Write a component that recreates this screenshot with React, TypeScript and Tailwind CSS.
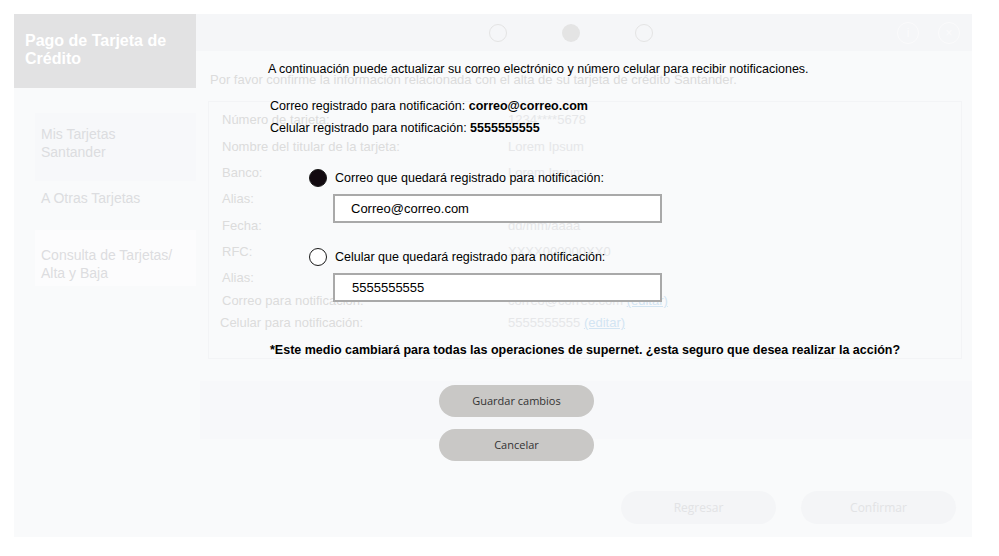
import { useState } from "react"

const FIELDS = [
  { label: "Número de tarjeta:", value: "1234****5678", y: "h-[27px]" },
  { label: "Nombre del titular de la tarjeta:", value: "Lorem Ipsum", y: "h-[26px]" },
  { label: "Banco:", value: "Lorem Ipsum", y: "h-[26px]" },
  { label: "Alias:", value: "Lorem Ipsum", y: "h-[27px]" },
  { label: "Fecha:", value: "dd/mm/aaaa", y: "h-[26px]" },
  { label: "RFC:", value: "XXXX000000XX0", y: "h-[26px]" },
  { label: "Alias:", value: "Lorem Ipsum", y: "h-[23px]" },
]

function Background() {
  return (
    <div className="ml-[14px] mt-[14px] flex h-[523px] w-[958px] bg-[#f9fafb]">
      <aside className="flex w-[182px] flex-col">
        <div className="h-[74px] bg-[#e2e2e3] px-[11px] pt-[18px] text-[16px] font-bold leading-[18px] text-white">
          Pago de Tarjeta de Crédito
        </div>
        <div className="mt-[25px] ml-[21px] flex flex-col text-[14px] leading-[18px] text-[#dcdde0]">
          <div className="h-[68px] bg-[#f7f8fa] pl-[6px] pr-[14px] pt-[12px]">Mis Tarjetas Santander</div>
          <div className="h-[49px] px-[6px] pt-[8px]">A Otras Tarjetas</div>
          <div className="h-[56px] bg-[#fcfcfd] pl-[6px] pr-[14px] pt-[16px]">Consulta de Tarjetas/ Alta y Baja</div>
        </div>
      </aside>
      <section className="flex flex-1 flex-col">
        <div className="flex h-[37px] items-center bg-[#f5f6f8] pl-[293px] pr-[12px]">
          <span className="h-[18px] w-[18px] rounded-full border border-[#e4e4e4]" />
          <span className="ml-[55px] h-[18px] w-[18px] rounded-full bg-[#e4e4e4]" />
          <span className="ml-[55px] h-[18px] w-[18px] rounded-full border border-[#e4e4e4]" />
          <span className="ml-auto flex h-[22px] w-[22px] items-center justify-center rounded-full border border-[#fbfbfc] text-[12px] text-[#fbfbfc]">i</span>
          <span className="ml-[19px] flex h-[22px] w-[22px] items-center justify-center rounded-full border border-[#fbfbfc] text-[12px] text-[#fbfbfc]">×</span>
        </div>
        <p className="ml-[14px] mt-[21px] text-[13px] leading-[16px] text-[#dcdcdc]">
          Por favor  confirme la información relacionada con el alta de su tarjeta de crédito Santander.
        </p>
        <div className="ml-[12px] mt-[13px] h-[258px] w-[754px] border border-[#f3f4f6] pl-[13px] pt-[10px] text-[13px] leading-[16px] text-[#dcdcdc]">
          {FIELDS.map((f, i) => (
            <div key={i} className={`flex ${f.y}`}>
              <span className="w-[286px]">{f.label}</span>
              <span className="text-[#e6e7e9]">{f.value}</span>
            </div>
          ))}
          <div className="flex h-[22px]">
            <span className="w-[286px]">Correo para notificación:</span>
            <span className="text-[#e6e7e9]">
              correo@correo.com <span className="text-[#d3e5f3] underline">(editar)</span>
            </span>
          </div>
          <div className="-ml-[2px] flex h-[22px]">
            <span className="w-[288px]">Celular para notificación:</span>
            <span className="text-[#e6e7e9]">
              5555555555 <span className="text-[#d3e5f3] underline">(editar)</span>
            </span>
          </div>
        </div>
        <div className="ml-[4px] mt-[22px] h-[58px] bg-[#f7f8fa]" />
        <div className="mt-[52px] flex justify-end gap-[25px] pr-[16px] text-[12px] text-[#e2e3e5]" style={{ fontFamily: "'Open Sans', sans-serif" }}>
          <span className="flex h-[33px] w-[155px] items-center justify-center rounded-full bg-[#f4f5f7]">Regresar</span>
          <span className="flex h-[33px] w-[155px] items-center justify-center rounded-full bg-[#f4f5f7]">Confirmar</span>
        </div>
      </section>
    </div>
  )
}

export default function App() {
  const [medio, setMedio] = useState<"correo" | "celular">("correo")

  return (
    <div className="relative h-[556px] w-[999px] overflow-hidden bg-white" style={{ fontFamily: "'Liberation Sans', Arial, sans-serif" }}>
      <Background />

      <div className="absolute left-0 top-0 flex h-full w-full flex-col pl-[268px] pt-[61px] text-[12.5px] leading-[16px] text-black">
        <p>A continuación puede actualizar su correo electrónico y número celular para recibir notificaciones.</p>

        <div className="ml-[2px] mt-[21px] flex flex-col gap-[6px]">
          <p>Correo registrado para notificación: <b>correo@correo.com</b></p>
          <p>Celular registrado para notificación: <b>5555555555</b></p>
        </div>

        <label className="ml-[41px] mt-[33px] flex items-center gap-[8px]" onClick={() => setMedio("correo")}>
          <span className={`h-[18px] w-[18px] rounded-full border-[1.5px] border-[#1a1a1a] ${medio === "correo" ? "bg-[#120a10]" : "bg-white"}`} />
          Correo que quedará registrado para notificación:
        </label>
        <input
          defaultValue="Correo@correo.com"
          className="ml-[65px] mt-[7px] h-[29px] w-[329px] border-2 border-[#a9a9a9] bg-white px-[16px] text-[13px] text-black outline-none"
        />

        <label className="ml-[41px] mt-[25px] flex items-center gap-[8px]" onClick={() => setMedio("celular")}>
          <span className={`h-[18px] w-[18px] rounded-full border-[1.5px] border-[#1a1a1a] ${medio === "celular" ? "bg-[#120a10]" : "bg-white"}`} />
          Celular que quedará registrado para notificación:
        </label>
        <input
          defaultValue="5555555555"
          className="ml-[65px] mt-[7px] h-[29px] w-[329px] border-2 border-[#a9a9a9] bg-white px-[17px] text-[13px] text-black outline-none"
        />

        <p className="ml-[2px] mt-[40px] font-bold">
          *Este medio cambiará para todas las operaciones de supernet. ¿esta seguro que desea realizar la acción?
        </p>

        <div className="ml-[171px] mt-[27px] flex flex-col gap-[12px] text-[11px] text-[#333]" style={{ fontFamily: "'Open Sans', sans-serif" }}>
          <button className="h-[32px] w-[155px] rounded-full bg-[#c9c8c6]">Guardar cambios</button>
          <button className="h-[32px] w-[155px] rounded-full bg-[#c9c8c6]">Cancelar</button>
        </div>
      </div>
    </div>
  )
}
